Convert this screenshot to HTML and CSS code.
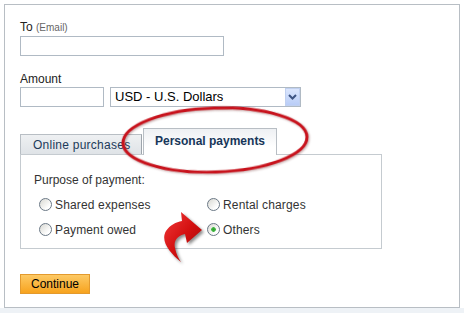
FILE: index.html
```html
<!DOCTYPE html>
<html>
<head>
<meta charset="utf-8">
<link rel="stylesheet" href="styles.css">
</head>
<body>
<div class="page">
  <div class="panel">
    <div class="field">
      <div class="label">To <span class="hint">(Email)</span></div>
      <input class="input input-email" type="text">
    </div>
    <div class="field field-amount">
      <div class="label">Amount</div>
      <div class="row">
        <input class="input input-amount" type="text">
        <div class="select">
          <span class="select-text">USD - U.S. Dollars</span>
          <span class="select-btn">
            <svg width="9" height="6" viewBox="0 0 9 6"><path d="M1 1 L4.5 4.5 L8 1" fill="none" stroke="#3d5482" stroke-width="2"/></svg>
          </span>
        </div>
      </div>
    </div>
    <div class="tabs">
      <div class="tab">Online purchases</div>
      <div class="tab tab-active">Personal payments</div>
    </div>
    <div class="tab-panel">
      <div class="purpose">Purpose of payment:</div>
      <div class="options">
        <label class="option"><input class="radio" type="radio" name="p">Shared expenses</label>
        <label class="option"><input class="radio" type="radio" name="p">Rental charges</label>
        <label class="option"><input class="radio" type="radio" name="p">Payment owed</label>
        <label class="option"><input class="radio" type="radio" name="p" checked>Others</label>
      </div>
    </div>
    <button class="continue" type="button">Continue</button>
  </div>
  <div class="strip"></div>
  <svg class="annotation" width="464" height="313" viewBox="0 0 464 313">
    <defs>
      <linearGradient id="arrowGrad" x1="0" y1="0" x2="1" y2="1">
        <stop offset="0" stop-color="#f03a3a"/>
        <stop offset="0.5" stop-color="#d41010"/>
        <stop offset="1" stop-color="#9a0606"/>
      </linearGradient>
    </defs>
    <ellipse class="ring" cx="215" cy="140" rx="92" ry="32" transform="rotate(-2 215 140)"/>
    <path class="arrow" d="M181 262 C170 253 160 241 166 231 C170 225 176 222 182 221 L181 212 L202 230 L187 243 L185 234 C179 235 173 240 175 248 C176 254 179 259 181 262 Z"/>
  </svg>
</div>
</body>
</html>
```
FILE: styles.css
```css
* {
  box-sizing: border-box;
}

html, body {
  margin: 0;
  padding: 0;
  background: #ffffff;
}

body {
  font-family: "Liberation Sans", Arial, sans-serif;
  font-size: 12px;
  color: #333333;
}

.page {
  position: relative;
  width: 464px;
  height: 313px;
  overflow: hidden;
}

.panel {
  margin: 4px 0 0 4px;
  width: 456px;
  height: 304px;
  border: 1px solid #b8bec4;
  padding: 15px 0 14px 15px;
  background: #ffffff;
}

.strip {
  height: 5px;
  background: #eef2f6;
}

.label {
  line-height: 14px;
  font-size: 12px;
  color: #222222;
}

.hint {
  font-size: 10px;
  color: #666666;
}

.input {
  display: block;
  margin: 1px 0 0 0;
  height: 20px;
  border: 1px solid #b0bac4;
  background: #ffffff;
  padding: 0 3px;
  font: inherit;
  outline: none;
}

.input-email {
  width: 204px;
}

.field-amount {
  margin-top: 16px;
}

.row {
  display: flex;
  gap: 6px;
  margin-top: 1px;
}

.row .input {
  margin: 0;
}

.input-amount {
  width: 84px;
}

.select {
  display: flex;
  width: 191px;
  height: 20px;
  border: 1px solid #b0bac4;
  background: #ffffff;
}

.select-text {
  flex: 1;
  padding-left: 4px;
  font-size: 13px;
  line-height: 18px;
  color: #000000;
}

.select-btn {
  display: flex;
  align-items: center;
  justify-content: center;
  width: 15px;
  height: 18px;
  border: 1px solid #c0d0f0;
  background: linear-gradient(#dbe6fd, #b9cdf7);
}

.tabs {
  display: flex;
  align-items: flex-end;
  margin-top: 21px;
}

.tab {
  width: 122px;
  border: 1px solid #b8bec4;
  border-bottom: none;
  border-right-color: #9ea5ac;
  padding: 3px 0 2px 12px;
  line-height: 14px;
  letter-spacing: 0.25px;
  color: #1d3a5a;
  background: linear-gradient(#eef0f2, #dfe3e7);
  white-space: nowrap;
}

.tab-active {
  position: relative;
  width: 134px;
  margin-left: 1px;
  margin-bottom: -1px;
  padding: 5px 0 7px 11px;
  border-right-color: #b8bec4;
  letter-spacing: 0;
  font-weight: bold;
  color: #173659;
  background: linear-gradient(#eef0f3, #ffffff 70%);
}

.tab-panel {
  width: 362px;
  height: 95px;
  border: 1px solid #c5cbd0;
  padding: 18px 0 11px 13px;
}

.purpose {
  line-height: 14px;
  color: #333333;
}

.options {
  display: grid;
  grid-template-columns: 168px auto;
  row-gap: 11px;
  margin-top: 11px;
  padding-left: 5px;
}

.option {
  display: flex;
  align-items: flex-start;
  line-height: 14px;
  letter-spacing: 0.15px;
  color: #333333;
  white-space: nowrap;
}

.radio {
  appearance: none;
  -webkit-appearance: none;
  width: 13px;
  height: 13px;
  margin: 0 3px 0 0;
  border: 1px solid #6b7886;
  border-radius: 50%;
  background: linear-gradient(135deg, #d8d8d2, #ffffff 75%);
}

.radio:checked {
  background:
    radial-gradient(circle at 50% 50%, #2f9e2f 0, #43b843 2px, transparent 2.6px),
    linear-gradient(135deg, #d8d8d2, #ffffff 75%);
}

.continue {
  display: block;
  margin-top: 25px;
  width: 70px;
  height: 20px;
  padding: 0;
  border: 1px solid #e39a2e;
  background: linear-gradient(#fdc964, #f7a31e);
  font-family: "Liberation Sans", Arial, sans-serif;
  font-size: 12px;
  line-height: 18px;
  color: #000000;
}

.annotation {
  position: absolute;
  left: 0;
  top: 0;
  pointer-events: none;
}

.ring {
  fill: none;
  stroke: #c8121c;
  stroke-width: 3;
  filter: drop-shadow(1px 1px 1px rgba(80, 0, 0, 0.35));
}

.arrow {
  fill: url(#arrowGrad);
  filter: drop-shadow(2px 2px 1.5px rgba(0, 0, 0, 0.45));
}
```
